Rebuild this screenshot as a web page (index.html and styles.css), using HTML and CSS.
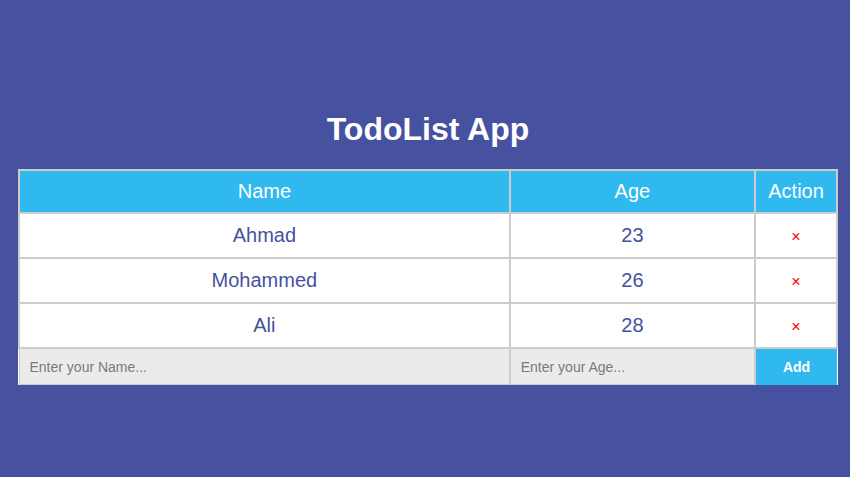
FILE: index.html
```html
<!DOCTYPE html>
<html>
<head>
<meta charset="utf-8">
<link rel="stylesheet" href="styles.css">
</head>
<body>
<div class="app">
  <h1 class="title">TodoList App</h1>
  <table class="list">
    <colgroup>
      <col class="c-name">
      <col class="c-age">
      <col class="c-act">
    </colgroup>
    <thead>
      <tr><th>Name</th><th>Age</th><th>Action</th></tr>
    </thead>
    <tbody>
      <tr><td>Ahmad</td><td>23</td><td><span class="del">×</span></td></tr>
      <tr><td>Mohammed</td><td>26</td><td><span class="del">×</span></td></tr>
      <tr><td>Ali</td><td>28</td><td><span class="del">×</span></td></tr>
      <tr class="form">
        <td><input type="text" placeholder="Enter your Name..."></td>
        <td><input type="text" placeholder="Enter your Age..."></td>
        <td class="add-cell"><button>Add</button></td>
      </tr>
    </tbody>
  </table>
</div>
</body>
</html>
```
FILE: styles.css
```css
html, body {
  margin: 0;
  padding: 0;
}
body {
  background: #46519f;
  font-family: "Liberation Sans", Arial, sans-serif;
  width: 850px;
  height: 477px;
}
.app {
  padding: 111px 12px 0 18px;
}
.title {
  margin: 0 0 21px 0;
  text-align: center;
  color: #ffffff;
  font-size: 32px;
  line-height: 37px;
  font-weight: bold;
}
.list {
  width: 820px;
  border-collapse: collapse;
  background: #ffffff;
}
.c-name { width: 492px; }
.c-age { width: 246px; }
.c-act { width: 82px; }
.list th, .list td {
  border: 2px solid #cccccc;
  text-align: center;
  font-size: 20px;
  line-height: 23px;
}
.list th {
  background: #2fb9ef;
  color: #ffffff;
  font-weight: normal;
  height: 41px;
  padding: 0;
}
.list td {
  color: #4652a0;
  height: 43px;
  padding: 0;
}
.del {
  color: #ff0000;
  font-size: 16px;
  line-height: 16px;
}
.list .form td {
  height: 35px;
  padding: 0;
  background: #ebebeb;
  border-bottom: 1px solid #cccccc;
  line-height: 0;
}
.list .form td:first-child {
  border-left: 1px solid #cccccc;
}
.list .form td.add-cell {
  background: #2fb9ef;
  border-right: hidden;
  border-bottom: hidden;
}
.form input {
  display: block;
  width: 100%;
  box-sizing: border-box;
  height: 35px;
  border: none;
  background: #ebebeb;
  padding: 0 10px;
  font-family: "Liberation Sans", Arial, sans-serif;
  font-size: 14px;
  color: #333;
  outline: none;
}
.form input::placeholder {
  color: #7a7a7a;
}
.form button {
  display: block;
  width: 100%;
  height: 35px;
  border: none;
  background: #2fb9ef;
  color: #ffffff;
  font-family: "Liberation Sans", Arial, sans-serif;
  font-size: 14px;
  font-weight: bold;
  cursor: pointer;
}
```
